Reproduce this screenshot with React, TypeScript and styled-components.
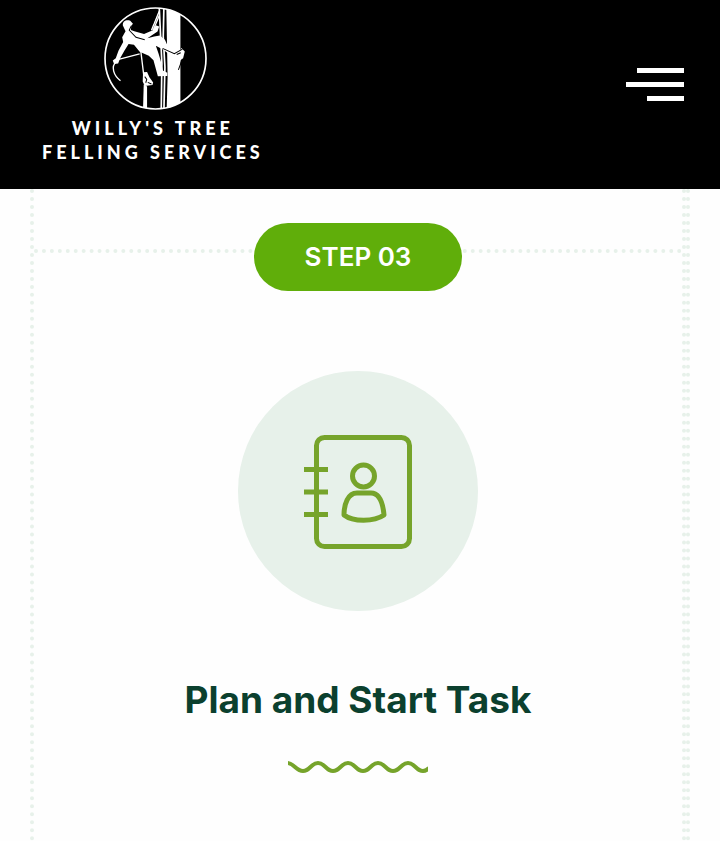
import React from "react";
import styled, { createGlobalStyle } from "styled-components";

const GlobalStyle = createGlobalStyle`
  * { box-sizing: border-box; }
  body {
    margin: 0;
    background: #fefefe;
    font-family: Inter, "Open Sans", sans-serif;
  }
`;

const Page = styled.div`
  display: flex;
  flex-direction: column;
  min-height: 100vh;
`;

const Header = styled.header`
  display: flex;
  align-items: flex-start;
  justify-content: space-between;
  min-height: 189px;
  padding: 7px 36px 24px 42px;
  background: #000;
`;

const Brand = styled.a`
  display: flex;
  flex-direction: column;
  align-items: center;
  color: #fff;
  text-decoration: none;
`;

const Emblem = styled.svg`
  width: 103px;
  height: 103px;
  margin-left: 6px;
`;

const BrandName = styled.span`
  margin-top: 6px;
  font-family: Lato, sans-serif;
  font-size: 18px;
  font-weight: 900;
  line-height: 24px;
  letter-spacing: 4px;
  text-align: center;
  white-space: pre-line;
`;

const MenuButton = styled.button`
  display: flex;
  flex-direction: column;
  align-items: flex-end;
  gap: 9px;
  margin-top: 61px;
  padding: 0;
  border: 0;
  background: none;
  cursor: pointer;
`;

const MenuBar = styled.span<{ $width: number }>`
  width: ${(p) => p.$width}px;
  height: 5px;
  background: #fff;
`;

const Steps = styled.main`
  display: flex;
  flex: 1;
  margin: 0 30px;
  border-right: 4px dotted #e7f1ea;
`;

const StepColumn = styled.section`
  display: flex;
  flex: 1;
  padding-top: 60px;
  border-right: 4px dotted #e7f1ea;
  border-left: 4px dotted #e7f1ea;
`;

const StepCard = styled.article`
  display: flex;
  flex: 1;
  flex-direction: column;
  align-items: center;
  padding-bottom: 40px;
  border-top: 4px dotted #e7f1ea;
`;

const StepLabel = styled.div`
  margin-top: -30px;
  padding: 0 51px;
  border-radius: 34px;
  background: #60ae0a;
  color: #fff;
  font-size: 26px;
  font-weight: 600;
  line-height: 68px;
`;

const IconDisc = styled.div`
  display: grid;
  place-items: center;
  width: 240px;
  height: 240px;
  margin-top: 80px;
  border-radius: 50%;
  background: #e7f1ea;
`;

const Title = styled.h2`
  margin: 66px 0 0;
  color: #0b402e;
  font-size: 37px;
  font-weight: 700;
  line-height: 46px;
  text-align: center;
`;

const Wave = styled.svg`
  margin-top: 38px;
`;

const ClimberEmblem = () => (
  <Emblem viewBox="30 22 306 306" aria-hidden="true">
    <defs>
      <clipPath id="disc"><circle cx="183" cy="175" r="150" /></clipPath>
    </defs>
    <g clipPath="url(#disc)">
      <path d="M215 20H257V330H216L219 230Z" fill="#fff" />
      <path d="M194 20L198 105L202 190L200 330M208 20L206 110L211 200L208 330" fill="none" stroke="#fff" strokeWidth="5" />
      <path d="M148 252L158 258V325H146Z" fill="#fff" />
    </g>
    <path d="M194 35L171 91M194 48L176 91M65 180L136 161M139 150L148 224M67 184C49 199 59 226 79 241" fill="none" stroke="#fff" strokeWidth="4" />
    <path d="M86 77C85 64 96 59 108 63L116 72L111 78L110 90L120 94L149 102L175 91L184 76L194 80L189 95L159 115L179 110L196 107L211 119L220 139L238 153L256 151L260 144L270 154L265 174L257 181L253 205L248 211L252 183L247 166L218 158L205 148L184 137L192 160L199 184L205 211L218 217L218 227L190 228L177 180L163 167L136 155L119 134L103 132L91 151L78 174L72 190L60 191L56 181L65 174L73 152L87 126L84 112L94 94Z" fill="#fff" />
    <path d="M111 78L105 91L125 112L151 119M188 35L173 75M204 145L239 161L263 147" fill="none" stroke="#000" strokeWidth="3" />
    <path d="M246 163L258 158M263 176L251 209" fill="none" stroke="#000" strokeWidth="3" />
    <path d="M146 216L158 215L165 231L176 246L174 254L151 257L145 243Z" fill="#fff" />
    <path d="M151 229L157 237L154 247M160 246L171 251" fill="none" stroke="#000" strokeWidth="3" />
    <circle cx="183" cy="175" r="150" fill="none" stroke="#fff" strokeWidth="5" />
  </Emblem>
);

const ContactBookIcon = () => (
  <svg width="108" height="116" viewBox="0 0 108 116" fill="none" stroke="#76a42b" strokeWidth="5" aria-hidden="true">
    <rect x="12.5" y="4.5" width="93" height="109" rx="8" />
    <path d="M0 36.5H24M0 59H24M0 81.5H24" />
    <circle cx="59.5" cy="43" r="11" />
    <path d="M53 60H67C76 60 79 71 80 82C70 89 49 89 40 82C40 71 44 60 53 60Z" strokeLinejoin="round" />
  </svg>
);

export default function App() {
  return (
    <Page>
      <GlobalStyle />
      <Header>
        <Brand href="#">
          <ClimberEmblem />
          <BrandName>{"WILLY'S TREE\nFELLING SERVICES"}</BrandName>
        </Brand>
        <MenuButton type="button" aria-label="Open menu">
          <MenuBar $width={47} />
          <MenuBar $width={58} />
          <MenuBar $width={37} />
        </MenuButton>
      </Header>
      <Steps>
        <StepColumn>
          <StepCard>
            <StepLabel>STEP 03</StepLabel>
            <IconDisc>
              <ContactBookIcon />
            </IconDisc>
            <Title>Plan and Start Task</Title>
            <Wave width="140" height="12" viewBox="0 0 140 12" fill="none" stroke="#76a42b" strokeWidth="4" aria-hidden="true">
              <path d="M-1 2C6 2 8 10 15 10S23 2 30 2S38 10 45 10S53 2 60 2S68 10 75 10S83 2 90 2S98 10 105 10S113 2 120 2S128 10 135 10Q138 10 141 7" />
            </Wave>
          </StepCard>
        </StepColumn>
      </Steps>
    </Page>
  );
}
